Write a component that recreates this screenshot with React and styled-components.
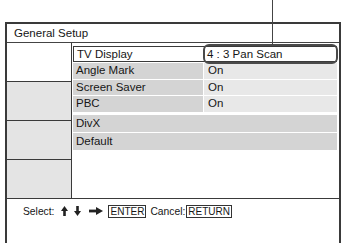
import styled, { createGlobalStyle } from "styled-components";

const Global = createGlobalStyle`
  html, body {
    margin: 0;
    padding: 0;
    background: #fff;
    overflow: hidden;
  }
  body {
    font-family: "Liberation Sans", Arial, sans-serif;
    color: #161616;
  }
`;

const Page = styled.div`
  position: relative;
  width: 343px;
  height: 243px;
  padding: 22px 2px 0 5px;
  box-sizing: border-box;
`;

const Pointer = styled.div`
  position: absolute;
  left: 272px;
  top: 0;
  width: 1px;
  height: 45px;
  background: #444;
  z-index: 2;
`;

const Frame = styled.div`
  border: 2px solid #3a3a3a;
  border-bottom: none;
  height: 219px;
  display: flex;
  flex-direction: column;
`;

const TitleBar = styled.div`
  height: 18px;
  line-height: 19px;
  padding-left: 7px;
  font-size: 11.5px;
  border-bottom: 1px solid #444;
`;

const Body = styled.div`
  display: grid;
  grid-template-columns: 65px 1fr;
`;

const Side = styled.div`
  border-right: 1px solid #3a3a3a;
  display: flex;
  flex-direction: column;
`;

const SideCell = styled.div`
  height: 38px;
  background: ${(p) => (p.$blank ? "#fff" : "#e4e4e4")};
  border-bottom: ${(p) => (p.$last ? "none" : "1px solid #3a3a3a")};
`;

const Menu = styled.div`
  padding: 3px 2px 0 1px;
  display: flex;
  flex-direction: column;
`;

const Group = styled.div`
  display: flex;
  flex-direction: column;
  gap: 1px;
  margin-bottom: ${(p) => p.$space || 0}px;
`;

const Row = styled.div`
  display: grid;
  grid-template-columns: 130px 1fr;
  height: ${(p) => p.$h || 15.5}px;
  font-size: 11.5px;
  line-height: ${(p) => p.$h || 15.5}px;
`;

const Label = styled.div`
  padding-left: 3px;
  background: ${(p) => (p.$active ? "#fff" : "#d4d4d4")};
  border: ${(p) => (p.$active ? "1px solid #3a3a3a" : "none")};
  border-right: none;
  line-height: ${(p) => (p.$active ? "14px" : "inherit")};
  ${(p) => p.$wide && "grid-column: 1 / span 2;"}
`;

const Value = styled.div`
  padding-left: 4px;
  background: #e8e8e8;
  margin-left: 1px;
`;

const ActiveValue = styled.div`
  position: relative;
  background: #fff;
  border-top: 1px solid #3a3a3a;
  border-bottom: 1px solid #3a3a3a;
  padding-left: 4px;
  line-height: 14px;
`;

const Callout = styled.div`
  position: absolute;
  left: 0;
  right: -1px;
  top: -3px;
  bottom: -3px;
  border: 2px solid #4a4a4a;
  border-radius: 6px;
  pointer-events: none;
`;

const Footer = styled.div`
  border-top: 1px solid #3a3a3a;
  padding: 5px 0 0 16px;
  font-size: 10.3px;
  display: flex;
  align-items: center;
  height: 14px;
`;

const Text = styled.span`
  margin-right: ${(p) => p.$mr || 0}px;
`;

const Key = styled.span`
  border: 1px solid #333;
  padding: 0 1px;
  line-height: 11px;
  font-size: 10px;
  margin-right: ${(p) => p.$mr || 0}px;
`;

const Glyph = styled.svg`
  margin-right: ${(p) => p.$mr || 0}px;
  transform: ${(p) => (p.$flip ? "rotate(180deg)" : "none")};
`;

const Arrow = ({ dir, mr }) => {
  if (dir === "right") {
    return (
      <Glyph $mr={mr} width="14" height="8" viewBox="0 0 14 8">
        <rect x="0" y="2.6" width="8" height="2.8" fill="#222" />
        <polygon points="7,0 14,4 7,8" fill="#222" />
      </Glyph>
    );
  }
  return (
    <Glyph $mr={mr} $flip={dir === "down"} width="7" height="10" viewBox="0 0 7 10">
      <polygon points="3.5,0 7,5 0,5" fill="#222" />
      <rect x="2.2" y="4.5" width="2.6" height="5.5" fill="#222" />
    </Glyph>
  );
};

const sideCells = [true, false, false, false];

export default function App() {
  return (
    <>
      <Global />
      <Page>
        <Pointer />
        <Frame>
          <TitleBar>General Setup</TitleBar>
          <Body>
            <Side>
              {sideCells.map((blank, i) => (
                <SideCell key={i} $blank={blank} $last={i === sideCells.length - 1} />
              ))}
            </Side>
            <Menu>
              <Group $space={3}>
                <Row $h={16}>
                  <Label $active>TV Display</Label>
                  <ActiveValue>
                    4 : 3 Pan Scan
                    <Callout />
                  </ActiveValue>
                </Row>
                <Row>
                  <Label>Angle Mark</Label>
                  <Value>On</Value>
                </Row>
                <Row>
                  <Label>Screen Saver</Label>
                  <Value>On</Value>
                </Row>
                <Row>
                  <Label>PBC</Label>
                  <Value>On</Value>
                </Row>
              </Group>
              <Group>
                <Row $h={17}>
                  <Label $wide>DivX</Label>
                </Row>
                <Row $h={17}>
                  <Label $wide>Default</Label>
                </Row>
              </Group>
            </Menu>
          </Body>
          <Footer>
            <Text $mr={7}>Select:</Text>
            <Arrow dir="up" mr={6} />
            <Arrow dir="down" mr={8} />
            <Arrow dir="right" mr={5} />
            <Key $mr={4}>ENTER</Key>
            <Text $mr={1}>Cancel:</Text>
            <Key>RETURN</Key>
          </Footer>
        </Frame>
      </Page>
    </>
  );
}
